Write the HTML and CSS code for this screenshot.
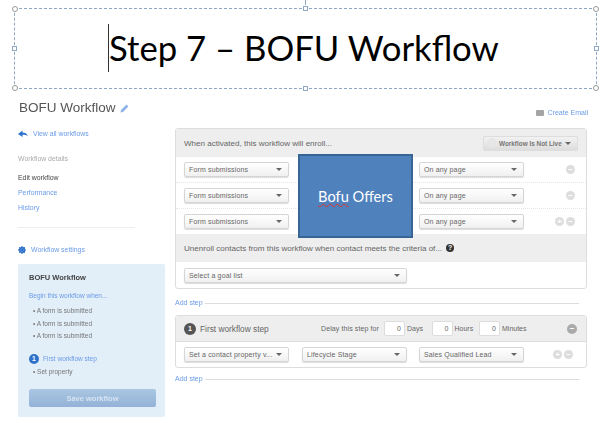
FILE: index.html
```html
<!DOCTYPE html>
<html lang="en">
<head>
<meta charset="utf-8">
<title>BOFU Workflow</title>
<link rel="stylesheet" href="styles.css">
</head>
<body>
<div class="slide-title">
  <span class="caret"></span><span class="slide-text">Step 7 – BOFU Workflow</span>
  <i class="h round tl"></i><i class="h tc"></i><i class="h round tr"></i>
  <i class="h ml"></i><i class="h mr"></i>
  <i class="h round bl"></i><i class="h bc"></i><i class="h round br"></i>
</div>
<div class="page-head">
  <h1 class="page-title">BOFU Workflow
    <svg class="pencil" width="9" height="9" viewBox="0 0 9 9"><path d="M0.5 8.5 L1 6 L6.5 0.6 L8.4 2.5 L3 8 Z" fill="#8db4e8"/></svg>
  </h1>
  <a class="create-email"><svg width="8" height="6" viewBox="0 0 8 6"><rect width="8" height="6" rx="1" fill="#a5a5a5"/></svg>Create Email</a>
</div>
<div class="layout">
  <aside class="side">
    <a class="link back"><svg width="10" height="8" viewBox="0 0 10 8"><path d="M0 4 L4.5 0.5 V2.6 C7 2.6 9 3.6 9.8 6.5 C8.5 5 7 4.8 4.5 4.8 V7 Z" fill="#2f72c9"/></svg>View all workflows</a>
    <div class="side-label">Workflow details</div>
    <nav class="side-nav">
      <span class="current">Edit workflow</span>
      <a class="link">Performance</a>
      <a class="link">History</a>
    </nav>
    <a class="link settings"><svg width="8" height="8" viewBox="0 0 8 8"><circle cx="4" cy="4" r="2.4" fill="none" stroke="#2f72c9" stroke-width="1.8"/><path d="M4 0V8M0 4H8M1.2 1.2L6.8 6.8M6.8 1.2L1.2 6.8" stroke="#2f72c9" stroke-width="1"/></svg>Workflow settings</a>
    <div class="card">
      <div class="card-title">BOFU Workflow</div>
      <a class="link card-begin">Begin this workflow when...</a>
      <ul class="card-list">
        <li>A form is submitted</li>
        <li>A form is submitted</li>
        <li>A form is submitted</li>
      </ul>
      <div class="card-step"><span class="num">1</span><a class="link">First workflow step</a></div>
      <ul class="card-list single"><li>Set property</li></ul>
      <button class="save">Save workflow</button>
    </div>
  </aside>
  <main class="main">
    <section class="panel enroll">
      <header class="panel-head">
        <span class="head-text">When activated, this workflow will enroll...</span>
        <span class="live"><i class="live-dot"></i>Workflow Is Not Live<i class="arrow"></i></span>
      </header>
      <div class="row">
        <span class="sel w-105">Form submissions<i class="arrow"></i></span>
        <span class="sel w-105 right-sel">On any page<i class="arrow"></i></span>
        <span class="ctrls"><i class="ctrl">−</i></span>
      </div>
      <div class="row">
        <span class="sel w-105">Form submissions<i class="arrow"></i></span>
        <span class="sel w-105 right-sel">On any page<i class="arrow"></i></span>
        <span class="ctrls"><i class="ctrl">−</i></span>
      </div>
      <div class="row last">
        <span class="sel w-105">Form submissions<i class="arrow"></i></span>
        <span class="sel w-105 right-sel">On any page<i class="arrow"></i></span>
        <span class="ctrls"><i class="ctrl">+</i><i class="ctrl">−</i></span>
      </div>
      <div class="unenroll"><span class="head-text">Unenroll contacts from this workflow when contact meets the criteria of...</span><i class="help">?</i></div>
      <div class="goal"><span class="sel w-223">Select a goal list<i class="arrow"></i></span></div>
      <div class="offers"><span class="offers-text"><span class="squiggle">Bofu</span> Offers</span></div>
    </section>
    <div class="add-step"><a class="link">Add step</a><span class="rule"></span></div>
    <section class="panel step">
      <header class="step-head">
        <span class="num dark">1</span><span class="step-title">First workflow step</span>
        <span class="delay">Delay this step for</span>
        <span class="time"><i class="box">0</i>Days</span>
        <span class="time"><i class="box">0</i>Hours</span>
        <span class="time"><i class="box">0</i>Minutes</span>
        <i class="ctrl big">−</i>
      </header>
      <div class="step-row">
        <span class="sel w-105">Set a contact property v...<i class="arrow"></i></span>
        <span class="sel w-105 mid">Lifecycle Stage<i class="arrow"></i></span>
        <span class="sel w-105 mid">Sales Qualified Lead<i class="arrow"></i></span>
        <span class="ctrls"><i class="ctrl">+</i><i class="ctrl">−</i></span>
      </div>
    </section>
    <div class="add-step second"><a class="link">Add step</a><span class="rule"></span></div>
  </main>
</div>
</body>
</html>
```
FILE: styles.css
```css
* { box-sizing: border-box; }
html, body { margin: 0; padding: 0; }
body {
  width: 600px;
  height: 423px;
  overflow: hidden;
  background: #fff;
  font-family: "Liberation Sans", Arial, sans-serif;
  font-size: 7px;
  color: #666;
}
i { font-style: normal; }
a { text-decoration: none; }
.link { color: #6a9be6; }

.slide-title {
  position: relative;
  margin: 8px 0 0 14px;
  width: 583px;
  height: 81px;
  border: 1px dashed #8fa6c4;
  display: flex;
  align-items: center;
  padding-left: 93px;
}
.slide-text {
  font-family: Lato, sans-serif;
  font-size: 34.7px;
  line-height: 48px;
  color: #000;
  margin-top: -1px;
  white-space: nowrap;
}
.caret { width: 1px; height: 48px; background: #333; margin-top: -1px; }
.h {
  position: absolute;
  width: 5px;
  height: 5px;
  background: #fff;
  border: 1px solid #8fa6c4;
}
.round { width: 6px; height: 6px; border-radius: 50%; border-color: #999; }
.tl { left: -3px; top: -3px; }
.tc { left: 288px; top: -3px; }
.tc::before {
  content: "";
  position: absolute;
  left: 1px;
  top: -7px;
  width: 1px;
  height: 5px;
  background: #8fa6c4;
}
.tr { right: -3px; top: -3px; }
.ml { left: -3px; top: 37px; }
.mr { right: -3px; top: 37px; }
.bl { left: -3px; bottom: -3px; }
.bc { left: 288px; bottom: -3px; }
.br { right: -3px; bottom: -3px; }

.page-head {
  display: flex;
  justify-content: space-between;
  align-items: flex-start;
  padding: 10px 12px 0 19px;
  height: 39px;
  filter: blur(0.35px);
}
.page-title {
  margin: 0;
  font-size: 13.5px;
  font-weight: 400;
  line-height: 18px;
  color: #555;
  display: flex;
  align-items: center;
  gap: 4px;
}
.create-email {
  color: #6a9be6;
  display: flex;
  align-items: center;
  gap: 4px;
  line-height: 9px;
  margin-top: 9px;
}

.layout {
  display: grid;
  grid-template-columns: 175px 412px;
  filter: blur(0.35px);
}
.side { padding-left: 18px; display: flex; flex-direction: column; font-size: 6.9px; }
.back { display: flex; align-items: center; gap: 5px; height: 10px; margin-top: 1px; line-height: 10px; }
.side-label { color: #aaa; margin-top: 15px; line-height: 10px; }
.side-nav { display: flex; flex-direction: column; gap: 5px; margin-top: 9px; width: 117px; padding-bottom: 14px; border-bottom: 1px solid #eee; line-height: 10px; }
.current { color: #444; }
.settings { display: flex; align-items: center; gap: 5px; margin-top: 17px; line-height: 10px; }
.card {
  width: 147px;
  height: 153px;
  margin-top: 9px;
  background: #e2eef8;
  border-radius: 2px;
  padding: 9px 10px 0 11px;
  display: flex;
  flex-direction: column;
  font-size: 6.5px;
}
.card-title { font-weight: 700; font-size: 7.5px; color: #444; line-height: 10px; }
.card-begin { margin-top: 8px; line-height: 10px; }
.card-list { list-style: none; margin: 4px 0 0; padding: 0 0 0 4px; color: #777; }
.card-list li { line-height: 12.6px; }
.card-list li::before { content: "• "; }
.card-list.single { margin-top: 2px; }
.card-step { display: flex; align-items: center; gap: 4px; margin-top: 11px; }
.num {
  width: 10px;
  height: 10px;
  border-radius: 50%;
  background: #2f72c9;
  color: #fff;
  font-weight: 700;
  font-size: 7px;
  line-height: 10px;
  text-align: center;
  flex: none;
}
.save {
  margin-top: 11px;
  width: 127px;
  height: 18px;
  border: 0;
  border-radius: 2px;
  background: linear-gradient(#a9c7e0, #94b2d8);
  color: #d6e3f2;
  font: 700 7.5px "Liberation Sans", Arial, sans-serif;
  padding: 0;
}

.main { position: relative; }
.panel {
  position: relative;
  border: 1px solid #ddd;
  border-radius: 3px;
  background: #fff;
}
.enroll { height: 161px; }
.panel-head {
  height: 28px;
  background: #eee;
  display: flex;
  align-items: center;
  justify-content: space-between;
  padding: 0 8px 0 8px;
}
.head-text { font-size: 8.05px; color: #666; white-space: nowrap; }
.live {
  width: 95px;
  height: 15px;
  border: 1px solid #ddd;
  border-radius: 2px;
  background: linear-gradient(#f2f2f2, #ddd);
  display: flex;
  align-items: center;
  font-weight: 700;
  font-size: 6.4px;
  color: #777;
  padding: 0 6px 0 3px;
  white-space: nowrap;
}
.live-dot { width: 10px; height: 10px; border-radius: 50%; background: #e6e6e6; margin-right: 2px; flex: none; }
.live .arrow { position: static; margin-left: auto; }
.row {
  height: 26px;
  padding: 5px 0 0 8px;
  display: flex;
  border-bottom: 1px dotted #e6e6e6;
}
.row.last { height: 25px; border-bottom: 0; }
.sel {
  position: relative;
  display: block;
  height: 15px;
  border: 1px solid #d5d5d5;
  border-radius: 2px;
  background: linear-gradient(#fff, #f0f0f0);
  box-shadow: 0 1px 1px #ddd;
  padding-left: 4px;
  line-height: 13px;
  color: #666;
  letter-spacing: 0.15px;
}
.arrow {
  position: absolute;
  right: 6px;
  top: 5px;
  width: 0;
  height: 0;
  border: 3px solid transparent;
  border-top: 3px solid #666;
  border-bottom: 0;
}
.w-105 { width: 105px; flex: none; }
.w-223 { width: 223px; }
.right-sel { margin-left: 130px; }
.ctrls { display: flex; gap: 2px; margin-left: auto; padding-right: 11px; padding-top: 3px; }
.ctrl {
  width: 9px;
  height: 9px;
  border-radius: 50%;
  background: #ddd;
  color: #fff;
  font-weight: 700;
  font-size: 8px;
  line-height: 9px;
  text-align: center;
}
.unenroll {
  height: 28px;
  background: #eee;
  display: flex;
  align-items: center;
  gap: 4px;
  padding-left: 8px;
}
.help {
  width: 8px;
  height: 8px;
  border-radius: 50%;
  background: #333;
  color: #fff;
  font-size: 7px;
  font-weight: 700;
  line-height: 8px;
  text-align: center;
}
.goal { padding: 6px 0 0 8px; }
.offers {
  position: absolute;
  left: 122px;
  top: 25px;
  width: 115px;
  height: 84px;
  background: #4f81bd;
  border: 2px solid #386596;
  display: flex;
  align-items: center;
  justify-content: center;
}
.offers-text { font-family: Lato, sans-serif; font-size: 14.6px; color: #fff; }
.squiggle { text-decoration: underline wavy #d33 1px; }

.add-step { display: flex; align-items: center; height: 10px; margin-top: 9px; gap: 2px; }
.add-step .link { line-height: 10px; }
.rule { width: 374px; height: 1px; background: #ddd; }
.add-step.second { margin-top: 6px; }
.step { height: 53px; margin-top: 7px; }
.step-head {
  height: 26px;
  background: #eee;
  border-bottom: 1px solid #ddd;
  display: flex;
  align-items: center;
  padding: 0 9px 0 8px;
}
.num.dark { width: 12px; height: 12px; line-height: 12px; background: #555; }
.step-title { font-size: 8.3px; color: #666; margin-left: 4px; width: 121px; white-space: nowrap; }
.delay { color: #666; width: 60px; letter-spacing: 0.1px; white-space: nowrap; }
.time { display: flex; align-items: center; gap: 2px; margin-left: 3px; width: 44.5px; }
.box {
  width: 21px;
  height: 15px;
  background: #fff;
  border: 1px solid #ddd;
  border-radius: 2px;
  text-align: right;
  padding-right: 3px;
  line-height: 13px;
  flex: none;
}
.ctrl.big { width: 10px; height: 10px; line-height: 10px; background: #aaa; margin-left: auto; }
.step-row { display: flex; padding: 5px 0 0 8px; }
.mid { margin-left: 13px; }
.step-row .mid + .mid { margin-left: 12px; }
.step-row .ctrls { padding-right: 13px; padding-top: 3px; }
```
